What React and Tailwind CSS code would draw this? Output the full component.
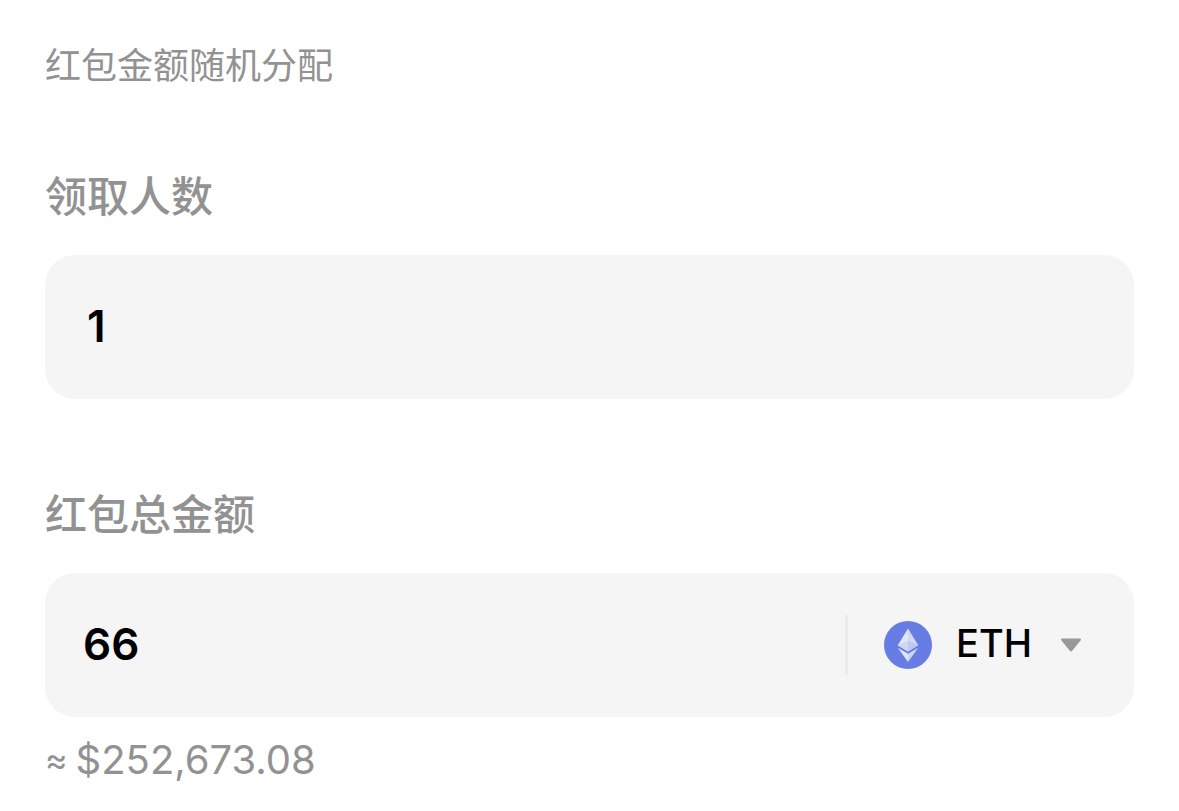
import { useState } from 'react'

const FIELD = 'mt-7 flex h-36 items-center rounded-[30px] bg-[#f5f5f5]'
const LABEL = 'block text-[42px] leading-[60px] font-medium text-[#929292]'
const INPUT =
  'h-full min-w-0 flex-1 bg-transparent pb-[2px] text-[44px] font-semibold text-black outline-none'

const EthIcon = () => (
  <svg viewBox="0 0 48 48" className="size-12 shrink-0" aria-hidden="true">
    <circle cx="24" cy="24" r="24" fill="#687de3" />
    <path d="M24 7.5 13.8 24.2 24 30.4z" fill="#e1e5f8" />
    <path d="M24 7.5 34.2 24.2 24 30.4z" fill="#d3d9f5" />
    <path d="M13.8 24.2 24 19.8v10.6z" fill="#d0d6f3" />
    <path d="M34.2 24.2 24 19.8v10.6z" fill="#bec7ef" />
    <path d="M13.8 26.8 24 32.8v8.2z" fill="#e1e5f8" />
    <path d="M34.2 26.8 24 32.8v8.2z" fill="#cdd4f5" />
  </svg>
)

const Caret = () => (
  <svg viewBox="0 0 22 14" className="pointer-events-none h-[14px] w-[22px] shrink-0" aria-hidden="true">
    <path
      d="M2 1.5h18L11 12.5z"
      fill="#999999"
      stroke="#999999"
      strokeWidth="2"
      strokeLinejoin="round"
    />
  </svg>
)

const App = () => {
  const [count, setCount] = useState('1')
  const [amount, setAmount] = useState('66')
  const [token, setToken] = useState('ETH')

  return (
    <main className="bg-white px-[45px] pt-10 pb-6 font-['Inter','Noto_Sans_CJK_SC',sans-serif]">
      <p className="text-[36px] leading-[52px] text-[#929292]">红包金额随机分配</p>

      {/* 领取人数 */}
      <div className="mt-[75px]">
        <label htmlFor="count" className={LABEL}>领取人数</label>
        <div className={FIELD}>
          <input
            id="count"
            type="text"
            inputMode="numeric"
            value={count}
            onChange={(e) => setCount(e.target.value)}
            className={`${INPUT} pl-[42px]`}
          />
        </div>
      </div>

      {/* 红包总金额 */}
      <div className="mt-[86px]">
        <label htmlFor="amount" className={LABEL}>红包总金额</label>
        <div className={`${FIELD} pr-[52px]`}>
          <input
            id="amount"
            type="text"
            inputMode="decimal"
            value={amount}
            onChange={(e) => setAmount(e.target.value)}
            className={`${INPUT} pl-[38px]`}
          />
          <div className="flex items-center border-l-[3px] border-[#ececec] py-[6px] pl-9">
            <EthIcon />
            <select
              aria-label="币种"
              value={token}
              onChange={(e) => setToken(e.target.value)}
              className="mr-[27px] ml-6 h-12 appearance-none bg-transparent pb-1 text-[38px] leading-[44px] font-medium text-black outline-none"
            >
              <option value="ETH">ETH</option>
            </select>
            <Caret />
          </div>
        </div>
        <p className="mt-5 flex items-center gap-2 text-[40px] leading-[46px] text-[#929292]">
          <span className="text-[34px]">≈</span>
          <span>$252,673.08</span>
        </p>
      </div>
    </main>
  )
}

export default App
